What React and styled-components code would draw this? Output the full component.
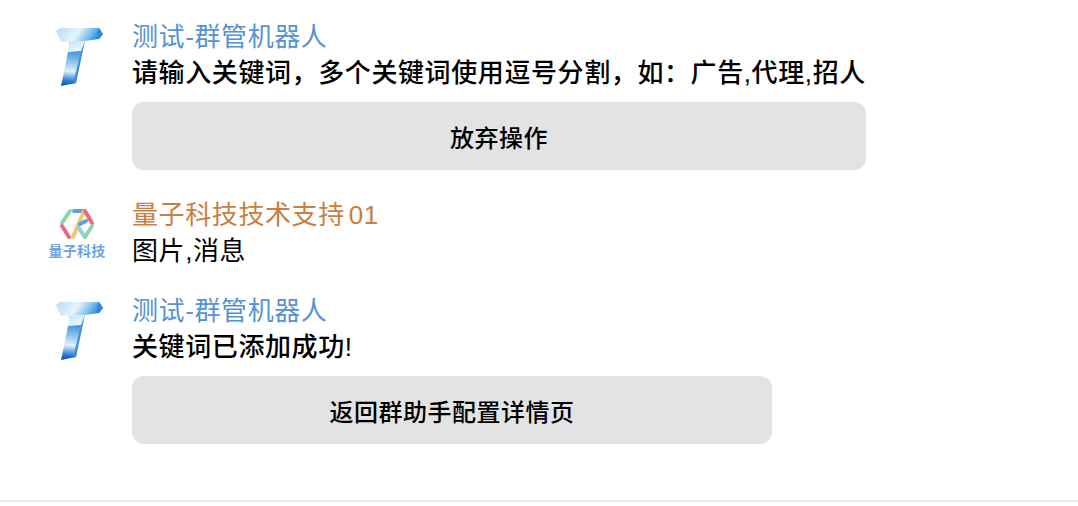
import React from "react";
import styled, { createGlobalStyle } from "styled-components";

const GlobalStyle = createGlobalStyle`
  html, body {
    margin: 0;
    padding: 0;
    background: #fff;
  }
  body {
    font-family: "Liberation Sans", "Noto Sans CJK SC", sans-serif;
  }
`;

function BotLogo() {
  return (
    <svg width="60" height="62" viewBox="0 0 60 62">
      <defs>
        <linearGradient id="botTop" x1="0" y1="0" x2="1" y2="0.2">
          <stop offset="0" stopColor="#b9dcf5" />
          <stop offset="0.5" stopColor="#e6f3fc" />
          <stop offset="0.78" stopColor="#7cc0ee" />
          <stop offset="1" stopColor="#2a86d8" />
        </linearGradient>
        <linearGradient id="botStem" x1="0.5" y1="0" x2="0.45" y2="1">
          <stop offset="0" stopColor="#3f93de" />
          <stop offset="0.3" stopColor="#8cc4ee" />
          <stop offset="0.58" stopColor="#e4f1fb" />
          <stop offset="0.85" stopColor="#2f7fd6" />
          <stop offset="1" stopColor="#0d4fb0" />
        </linearGradient>
        <linearGradient id="botNeck" x1="0" y1="0" x2="0.6" y2="1">
          <stop offset="0" stopColor="#c6e2f7" />
          <stop offset="1" stopColor="#f3f9fd" />
        </linearGradient>
      </defs>
      <path d="M8 4 L12 1 H51 L55 7 L51 12 L37 14 L13 15 Z" fill="url(#botTop)" />
      <path d="M21 14.5 L37 14 L33 24 L20 25 Z" fill="url(#botNeck)" />
      <path d="M51 1 L55 7 L51 12 L49 6 Z" fill="#2f8ada" />
      <path d="M20 25 L33 24 L28 56 L13 59 Z" fill="url(#botStem)" />
      <path d="M33 24 L37 14 L28 56 L25 57 Z" fill="#3d8fdc" />
    </svg>
  );
}

function CompanyLogo() {
  return (
    <LogoStack>
      <svg width="36" height="32" viewBox="0 0 36 32" fill="none" strokeWidth="4" strokeLinecap="round">
        <path d="M11 3 L3 15" stroke="#8ad8a8" />
        <path d="M3 18 L10 29" stroke="#e8688a" />
        <path d="M15 3 H24" stroke="#5aa3ea" />
        <path d="M25 3 L14 29" stroke="#f3c968" />
        <path d="M21 16 L27 13" stroke="#5aa3ea" />
        <path d="M20 20 L25 28" stroke="#8fd0e8" />
        <path d="M26 3 L33 15" stroke="#e8688a" />
        <path d="M33 18 L26 29" stroke="#8ad8a8" />
      </svg>
      <LogoText>量子科技</LogoText>
    </LogoStack>
  );
}

function Message({ logo, name, nameColor, bold, text, button, buttonWidth, gap }) {
  return (
    <Row $gap={gap}>
      <Avatar>{logo}</Avatar>
      <Body>
        <Name $color={nameColor}>{name}</Name>
        <Text $bold={bold}>{text}</Text>
        {button && <ActionButton $width={buttonWidth}>{button}</ActionButton>}
      </Body>
    </Row>
  );
}

export default function App() {
  return (
    <>
      <GlobalStyle />
      <Page>
        <Message
          logo={<BotLogo />}
          name="测试-群管机器人"
          nameColor="#5593d2"
          bold
          text="请输入关键词，多个关键词使用逗号分割，如：广告,代理,招人"
          button="放弃操作"
          buttonWidth={734}
          gap={27}
        />
        <Message
          logo={<CompanyLogo />}
          name={
            <>
              量子科技技术支持<Digits>01</Digits>
            </>
          }
          nameColor="#c97f3f"
          text="图片,消息"
          gap={24}
        />
        <Message
          logo={<BotLogo />}
          name="测试-群管机器人"
          nameColor="#5593d2"
          bold
          text="关键词已添加成功!"
          button="返回群助手配置详情页"
          buttonWidth={640}
          gap={0}
        />
      </Page>
      <Divider />
    </>
  );
}

const Page = styled.div`
  height: 481px;
  box-sizing: border-box;
  padding: 19px 0 0 48px;
  display: flex;
  flex-direction: column;
`;
const Row = styled.div`
  display: flex;
  margin-bottom: ${(p) => p.$gap}px;
`;
const Avatar = styled.div`
  width: 84px;
  flex-shrink: 0;
  padding-top: 8px;
`;
const LogoStack = styled.div`
  width: 58px;
  display: flex;
  flex-direction: column;
  align-items: center;
  margin-top: 3px;
`;
const LogoText = styled.div`
  font-size: 14px;
  line-height: 16px;
  font-weight: 700;
  letter-spacing: 0.3px;
  color: #6fa4e4;
  margin-top: 3px;
  white-space: nowrap;
`;
const Body = styled.div`
  display: flex;
  flex-direction: column;
`;
const Name = styled.div`
  font-size: 26px;
  line-height: 35px;
  padding-top: 1px;
  letter-spacing: 0.6px;
  color: ${(p) => p.$color};
  white-space: nowrap;
`;
const Digits = styled.span`
  margin-left: 4px;
`;
const Text = styled.div`
  font-size: 26px;
  line-height: 35px;
  padding-top: 1px;
  letter-spacing: 0.6px;
  font-weight: ${(p) => (p.$bold ? 500 : 400)};
  color: #000;
  white-space: nowrap;
`;
const ActionButton = styled.div`
  width: ${(p) => p.$width}px;
  height: 68px;
  margin-top: 11px;
  border-radius: 12px;
  background: #e3e3e3;
  display: flex;
  align-items: center;
  justify-content: center;
  font-size: 24px;
  font-weight: 500;
  letter-spacing: 0.5px;
  color: #000;
`;
const Divider = styled.div`
  height: 2px;
  margin-top: 19px;
  background: #e8e8e8;
`;
